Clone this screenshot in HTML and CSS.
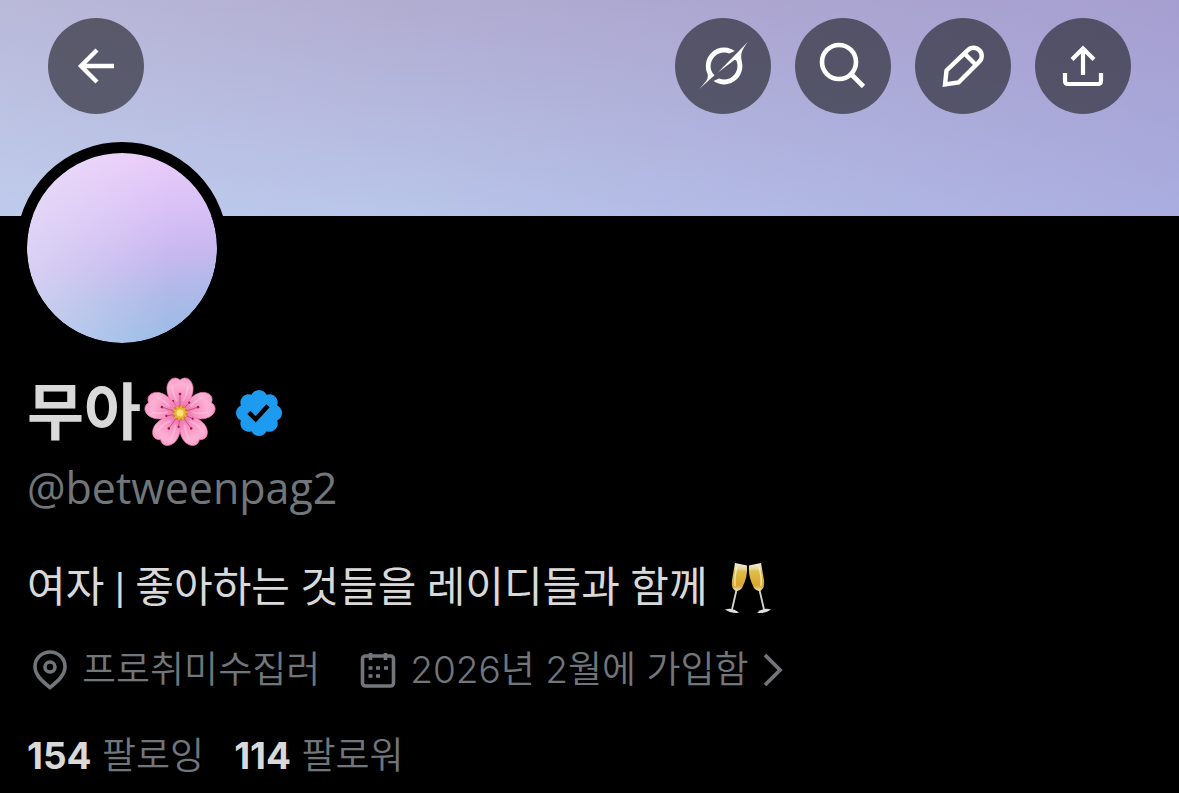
FILE: index.html
```html
<!DOCTYPE html>
<html lang="ko">
<head>
    <meta charset="UTF-8">
    <meta name="viewport" content="width=device-width, initial-scale=1.0">
    <title>무아 (@betweenpag2)</title>
    <link rel="stylesheet" href="styles.css">
</head>
<body>
    <header class="banner">
        <button type="button" class="round-btn" aria-label="뒤로">
            <svg viewBox="0 0 96 96" fill="none" stroke="#fff" stroke-width="4.4">
                <path d="M66 48H32M49 32L33 48l16 16"/>
            </svg>
        </button>
        <nav class="actions">
            <button type="button" class="round-btn" aria-label="Grok">
                <svg viewBox="0 0 96 96" fill="#fff">
                    <path transform="translate(24 24) scale(1.48)" d="M12.745 20.54l10.97-8.19c.539-.4 1.307-.244 1.564.38 1.349 3.288.746 7.241-1.938 9.955-2.683 2.714-6.417 3.31-9.83 1.954l-3.728 1.745c5.347 3.697 11.84 2.782 15.898-1.324 3.219-3.255 4.216-7.692 3.284-11.693l.008.009c-1.351-5.878.332-8.227 3.782-13.031L33 0l-4.54 4.59v-.014L12.743 20.544m-2.263 1.987c-3.837-3.707-3.175-9.446.1-12.755 2.42-2.449 6.388-3.448 9.852-1.979l3.72-1.737c-.67-.49-1.53-1.017-2.515-1.387-4.455-1.854-9.789-.931-13.41 2.728-3.483 3.523-4.579 8.94-2.697 13.561 1.405 3.454-.899 5.898-3.22 8.364C1.49 30.2.666 31.074 0 32l10.478-9.466"/>
                </svg>
            </button>
            <button type="button" class="round-btn" aria-label="검색">
                <svg viewBox="0 0 96 96" fill="none" stroke="#fff" stroke-width="4.6">
                    <circle cx="44" cy="44" r="17"/>
                    <path d="M56 56l12.500 12.500"/>
                </svg>
            </button>
            <button type="button" class="round-btn" aria-label="수정">
                <svg viewBox="0 0 96 96" fill="none" stroke="#fff" stroke-width="4.4">
                    <path d="M30 66.500l1.500-14L52.800 32.200a8 8 0 0 1 11.500 0a8 8 0 0 1 0 11.500L43.500 64.500zM49.500 35.500l11.500 11.500"/>
                </svg>
            </button>
            <button type="button" class="round-btn" aria-label="공유">
                <svg viewBox="0 0 96 96" fill="none" stroke="#fff" stroke-width="4.2">
                    <path d="M48 57V30M37 41.500l11-11 11 11M30 55v8q0 3 3 3h30q3 0 3-3v-8"/>
                </svg>
            </button>
        </nav>
    </header>

    <main class="profile">
        <div class="avatar" role="img" aria-label="프로필 사진"></div>

        <h1 class="name">
            <span>무아</span>
            <svg class="flower" viewBox="-36 -36 72 72" role="img" aria-label="벚꽃">
                <defs>
                    <radialGradient id="petalFill" gradientUnits="userSpaceOnUse" cx="0" cy="0" r="36">
                        <stop offset="0" stop-color="#e9669f"/>
                        <stop offset="0.45" stop-color="#f792c2"/>
                        <stop offset="0.8" stop-color="#fdb0d4"/>
                        <stop offset="1" stop-color="#f99cc8"/>
                    </radialGradient>
                    <g id="petal">
                        <path d="M0 0C-7-7-14-17-13-26C-12-33-6-38 0-33C6-38 12-33 13-26C14-17 7-7 0 0z" fill="url(#petalFill)" stroke="#ec79ad" stroke-width="0.700"/>
                        <path d="M-8-27Q-7-18-3-12M8-27Q7-18 3-12" fill="none" stroke="#ffc9e2" stroke-width="2" opacity="0.500"/>
                        <path d="M0-5V-18M-3-5L-7-12" stroke="#c23c72" stroke-width="0.700"/>
                        <circle cy="-19" r="1.300" fill="#8d1f4c"/>
                        <circle cx="-7" cy="-12" r="1.100" fill="#8d1f4c"/>
                    </g>
                </defs>
                <use href="#petal"/>
                <use href="#petal" transform="rotate(72)"/>
                <use href="#petal" transform="rotate(144)"/>
                <use href="#petal" transform="rotate(216)"/>
                <use href="#petal" transform="rotate(288)"/>
                <circle r="7" fill="#e9b23c"/>
                <circle r="6.500" fill="none" stroke="#c98322" stroke-width="2" stroke-dasharray="2 2"/>
                <circle r="3.500" fill="#ffe36e"/>
            </svg>
            <svg class="badge" viewBox="0 0 22 22" fill="#1d9bf0" role="img" aria-label="인증된 계정">
                <path d="M20.396 11c-.018-.646-.215-1.275-.57-1.816-.354-.54-.852-.972-1.438-1.246.223-.607.27-1.264.14-1.897-.131-.634-.437-1.218-.882-1.687-.47-.445-1.053-.75-1.687-.882-.633-.13-1.29-.083-1.897.14-.273-.587-.704-1.086-1.245-1.44S11.647 1.62 11 1.604c-.646.017-1.273.213-1.813.568s-.969.854-1.24 1.44c-.608-.223-1.267-.272-1.902-.14-.635.13-1.22.436-1.69.882-.445.47-.749 1.055-.878 1.688-.13.633-.08 1.29.144 1.896-.587.274-1.087.705-1.443 1.245-.356.54-.555 1.17-.574 1.817.02.647.218 1.276.574 1.817.356.54.856.972 1.443 1.245-.224.606-.274 1.263-.144 1.896.13.634.433 1.218.877 1.688.47.443 1.054.747 1.687.878.633.132 1.29.084 1.897-.136.274.586.705 1.084 1.246 1.439.54.354 1.17.551 1.816.569.647-.016 1.276-.213 1.817-.567s.972-.854 1.245-1.44c.604.239 1.266.296 1.903.164.636-.132 1.22-.447 1.68-.907.46-.46.776-1.044.908-1.681s.075-1.299-.165-1.903c.586-.274 1.084-.705 1.439-1.246.354-.54.551-1.17.569-1.816zM9.662 14.85l-3.429-3.428 1.293-1.302 2.072 2.072 4.4-4.794 1.347 1.246z"/>
            </svg>
        </h1>
        <p class="handle">@betweenpag2</p>

        <p class="bio">
            <span>여자 | 좋아하는 것들을 레이디들과 함께</span>
            <svg class="glasses" viewBox="0 0 48 52" role="img" aria-label="건배">
                <defs>
                    <linearGradient id="wine" x1="0" y1="0" x2="0" y2="1">
                        <stop offset="0" stop-color="#f4f1e6"/>
                        <stop offset="0.2" stop-color="#e6d69a"/>
                        <stop offset="0.3" stop-color="#dfbd4b"/>
                        <stop offset="0.8" stop-color="#d7a62f"/>
                        <stop offset="1" stop-color="#efe2ae"/>
                    </linearGradient>
                </defs>
                <g id="glass">
                    <path d="M12.500 28L8 47.500" stroke="#d8d6d0" stroke-width="1.800"/>
                    <path d="M1 47.500Q8 45 15 50.500Q8 52.500 1 47.500z" fill="#dedede"/>
                    <path d="M11 1L23 3.500Q24 15 18 26Q15 30 11 28.500Q7 26 8 18Z" fill="url(#wine)"/>
                    <path d="M13 5Q10 15 11 24" fill="none" stroke="#fff6c8" stroke-width="1.600" opacity="0.700"/>
                </g>
                <use href="#glass" transform="translate(48) scale(-1 1)"/>
            </svg>
        </p>

        <div class="meta">
            <span class="meta-item">
                <svg class="meta-icon" viewBox="0 0 40 40" fill="none" stroke="#71767b" stroke-width="3.600">
                    <path d="M20 37.500C12 31 5 25 5 16.500a15 14.500 0 0 1 30 0C35 25 28 31 20 37.500z"/>
                    <circle cx="20" cy="17" r="5"/>
                </svg>
                <span>프로취미수집러</span>
            </span>
            <a href="#" class="meta-item">
                <svg class="meta-icon" viewBox="0 0 40 40" fill="none" stroke="#71767b" stroke-width="3.600">
                    <rect x="4.500" y="6" width="31" height="30" rx="3"/>
                    <path d="M12.500 3v7M27.500 3v7"/>
                    <path d="M10.500 18h4M18 18h4M26 18h4M10.500 26h4M18 26h4"/>
                </svg>
                <span>2026년 2월에 가입함</span>
                <svg class="chevron" viewBox="0 0 24 40" fill="none" stroke="#71767b" stroke-width="3.800">
                    <path d="M4 5l15 15L4 35"/>
                </svg>
            </a>
        </div>

        <div class="stats">
            <a href="#"><strong>154</strong> 팔로잉</a>
            <a href="#"><strong>114</strong> 팔로워</a>
        </div>
    </main>
</body>
</html>
```

FILE: styles.css
```css
* {
    box-sizing: border-box;
}

body {
    margin: 0;
    background-color: #000;
    color: #d9d9d9;
    font-family: Inter, "Noto Sans CJK KR", sans-serif;
}

h1,
p {
    margin: 0;
}

a {
    color: inherit;
    text-decoration: none;
}

svg {
    display: block;
    flex: none;
}

.banner {
    display: flex;
    justify-content: space-between;
    align-items: flex-start;
    height: 216px;
    padding: 18px 48px;
    background:
        linear-gradient(90deg, rgba(208, 216, 236, 0.25), rgba(170, 165, 225, 0) 35%, rgba(150, 145, 215, 0.4)),
        linear-gradient(183deg, #b0a8cc, #b3b3d8 38%, #b9c6eb 95%);
}

.actions {
    display: flex;
    gap: 24px;
}

.round-btn {
    width: 96px;
    height: 96px;
    padding: 0;
    border: none;
    border-radius: 50%;
    background-color: rgba(34, 34, 42, 0.64);
    cursor: pointer;
}

.profile {
    padding: 0 27px;
}

.avatar {
    width: 212px;
    height: 212px;
    margin: -74px 0 0 -11px;
    border: 11px solid #000;
    border-radius: 50%;
    background:
        linear-gradient(90deg, rgba(232, 236, 246, 0.45), rgba(232, 236, 246, 0) 75%) padding-box,
        linear-gradient(172deg, #eccdfa 5%, #d9c1f6 35%, #c8b8f0 56%, #afb9e8 74%, #9abce6 95%) padding-box;
}

.name {
    display: flex;
    align-items: center;
    margin-top: 23px;
    font-size: 62px;
    line-height: 72px;
    font-weight: 700;
}

.flower {
    width: 72px;
    height: 72px;
    margin-left: 3px;
}

.badge {
    width: 54px;
    height: 54px;
    margin-left: 16px;
}

.handle {
    margin-top: 15px;
    color: #71767b;
    font-family: "Open Sans", sans-serif;
    font-size: 43px;
    line-height: 48px;
}

.bio {
    display: flex;
    align-items: center;
    gap: 16px;
    margin-top: 48px;
    font-family: Roboto, "Noto Sans CJK KR", sans-serif;
    font-size: 42px;
    line-height: 56px;
}

.glasses {
    width: 48px;
    height: 52px;
}

.meta {
    display: flex;
    gap: 38px;
    margin-top: 30px;
    padding-left: 3px;
    color: #71767b;
    font-size: 37px;
    line-height: 48px;
    font-weight: 350;
}

.meta-item {
    display: flex;
    align-items: center;
    gap: 12px;
}

.meta-icon {
    width: 40px;
    height: 40px;
}

.chevron {
    width: 24px;
    height: 40px;
}

.stats {
    display: flex;
    gap: 30px;
    margin-top: 38px;
    color: #71767b;
    font-size: 37px;
    line-height: 48px;
    font-weight: 350;
}

.stats strong {
    color: #d9d9d9;
    font-weight: 700;
}
```
